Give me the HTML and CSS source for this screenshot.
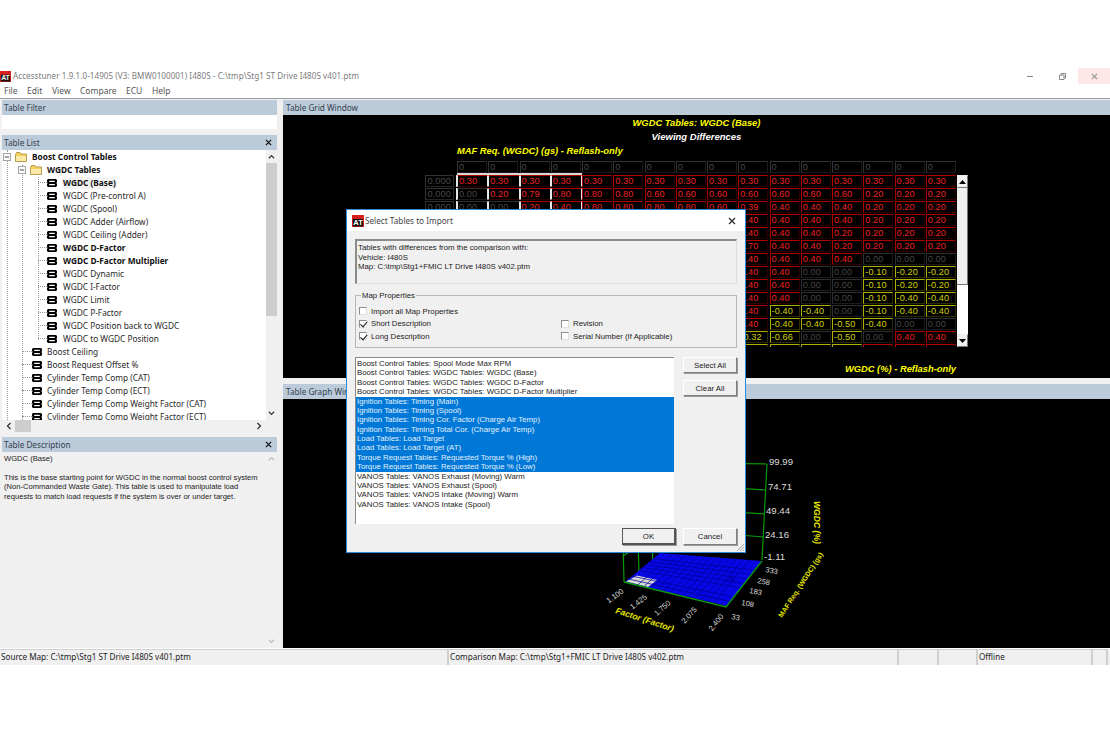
FILE: index.html
```html
<!DOCTYPE html>
<html lang="en">
<head>
<meta charset="utf-8">
<title>Accesstuner</title>
<link rel="stylesheet" href="styles.css">
</head>
<body>
<svg class="defs" width="0" height="0" aria-hidden="true">
  <symbol id="tbl" viewBox="0 0 10 8"><path fill-rule="evenodd" d="M1 0H9L10 1V3L9.4 4L10 5V7L9 8H1L0 7V5L.6 4L0 3V1ZM2.200 1.800V3H7.800V1.800ZM2.200 5V6.200H7.800V5Z" fill="#000"/></symbol>
  <symbol id="folder" viewBox="0 0 12 10"><path d="M.5 2.500V9.500H11.500V2H6L5 .5H1.500Z" fill="#f5cf5f" stroke="#a88a3a" stroke-width=".8"/><path d="M1 4H11V9H1Z" fill="#fbe9a8"/></symbol>
  <symbol id="minus" viewBox="0 0 9 9"><rect x=".5" y=".5" width="8" height="8" fill="#fff" stroke="#999"/><path d="M2 4.500H7" stroke="#333"/></symbol>
  <symbol id="up" viewBox="0 0 8 6"><path d="M1 5L4 2L7 5" fill="none" stroke="currentColor" stroke-width="1.300"/></symbol>
  <symbol id="down" viewBox="0 0 8 6"><path d="M1 1L4 4L7 1" fill="none" stroke="currentColor" stroke-width="1.300"/></symbol>
  <symbol id="left" viewBox="0 0 6 8"><path d="M5 1L2 4L5 7" fill="none" stroke="currentColor" stroke-width="1.300"/></symbol>
  <symbol id="right" viewBox="0 0 6 8"><path d="M1 1L4 4L1 7" fill="none" stroke="currentColor" stroke-width="1.300"/></symbol>
  <symbol id="x" viewBox="0 0 8 8"><path d="M1 1L7 7M7 1L1 7" fill="none" stroke="currentColor" stroke-width="1.400"/></symbol>
  <symbol id="at" viewBox="0 0 12 12"><rect width="12" height="12" fill="#d8201f"/><rect x="1" y="4" width="10" height="7.400" fill="#111"/><text x="6" y="10.200" text-anchor="middle" font-family="Liberation Sans" font-weight="700" font-size="7.500" fill="#fff">AT</text></symbol>
</svg>

<div class="window">
  <header class="titlebar">
    <svg class="app-icon"><use href="#at"/></svg>
    <span class="app-title">Accesstuner 1.9.1.0-14905 (V3: BMW0100001) I480S - C:\tmp\Stg1 ST Drive I480S v401.ptm</span>
    <span class="win-btn"><svg width="6" height="1"><path d="M0 .5H6" stroke="#888"/></svg></span>
    <span class="win-btn"><svg width="7" height="7" viewBox="0 0 7 7"><path d="M.5 2H5V6.500H.5ZM2 2V.5H6.500V5H5" fill="none" stroke="#888"/></svg></span>
    <span class="win-btn close"><svg width="7" height="7"><use href="#x"/></svg></span>
  </header>
  <nav class="menubar">
    <span>File</span><span>Edit</span><span>View</span><span>Compare</span><span>ECU</span><span>Help</span>
  </nav>

  <main class="workspace">
    <aside class="left">
      <div class="pane-head"><span>Table Filter</span></div>
      <div class="filter"></div>
      <div class="pane-head"><span>Table List</span><svg class="pane-x"><use href="#x"/></svg></div>
      <div class="tree-wrap">
        <div class="tree-row">
          <div class="tree">
            <i class="guide g1"></i><i class="guide g2"></i><i class="guide g3"></i>
            <div class="node n0 b"><svg class="exp"><use href="#minus"/></svg><svg class="fold"><use href="#folder"/></svg><span>Boost Control Tables</span></div>
            <div class="node n1 b"><svg class="exp"><use href="#minus"/></svg><svg class="fold"><use href="#folder"/></svg><span>WGDC Tables</span></div>
            <div class="node n2 b"><i class="conn"></i><svg class="tbl"><use href="#tbl"/></svg><span class="cur">WGDC (Base)</span></div>
            <div class="node n2"><i class="conn"></i><svg class="tbl"><use href="#tbl"/></svg><span>WGDC (Pre-control A)</span></div>
            <div class="node n2"><i class="conn"></i><svg class="tbl"><use href="#tbl"/></svg><span>WGDC (Spool)</span></div>
            <div class="node n2"><i class="conn"></i><svg class="tbl"><use href="#tbl"/></svg><span>WGDC Adder (Airflow)</span></div>
            <div class="node n2"><i class="conn"></i><svg class="tbl"><use href="#tbl"/></svg><span>WGDC Ceiling (Adder)</span></div>
            <div class="node n2 b"><i class="conn"></i><svg class="tbl"><use href="#tbl"/></svg><span>WGDC D-Factor</span></div>
            <div class="node n2 b"><i class="conn"></i><svg class="tbl"><use href="#tbl"/></svg><span>WGDC D-Factor Multiplier</span></div>
            <div class="node n2"><i class="conn"></i><svg class="tbl"><use href="#tbl"/></svg><span>WGDC Dynamic</span></div>
            <div class="node n2"><i class="conn"></i><svg class="tbl"><use href="#tbl"/></svg><span>WGDC I-Factor</span></div>
            <div class="node n2"><i class="conn"></i><svg class="tbl"><use href="#tbl"/></svg><span>WGDC Limit</span></div>
            <div class="node n2"><i class="conn"></i><svg class="tbl"><use href="#tbl"/></svg><span>WGDC P-Factor</span></div>
            <div class="node n2"><i class="conn"></i><svg class="tbl"><use href="#tbl"/></svg><span>WGDC Position back to WGDC</span></div>
            <div class="node n2"><i class="conn"></i><svg class="tbl"><use href="#tbl"/></svg><span>WGDC to WGDC Position</span></div>
            <div class="node n3"><i class="conn"></i><svg class="tbl"><use href="#tbl"/></svg><span>Boost Ceiling</span></div>
            <div class="node n3"><i class="conn"></i><svg class="tbl"><use href="#tbl"/></svg><span>Boost Request Offset %</span></div>
            <div class="node n3"><i class="conn"></i><svg class="tbl"><use href="#tbl"/></svg><span>Cylinder Temp Comp (CAT)</span></div>
            <div class="node n3"><i class="conn"></i><svg class="tbl"><use href="#tbl"/></svg><span>Cylinder Temp Comp (ECT)</span></div>
            <div class="node n3"><i class="conn"></i><svg class="tbl"><use href="#tbl"/></svg><span>Cylinder Temp Comp Weight Factor (CAT)</span></div>
            <div class="node n3"><i class="conn"></i><svg class="tbl"><use href="#tbl"/></svg><span>Cylinder Temp Comp Weight Factor (ECT)</span></div>
          </div>
          <div class="vscroll">
            <svg class="arr"><use href="#up"/></svg>
            <div class="thumb"></div>
            <svg class="arr"><use href="#down"/></svg>
          </div>
        </div>
        <div class="hscroll">
          <svg class="harr"><use href="#left"/></svg>
          <div class="hthumb"></div>
          <svg class="harr"><use href="#right"/></svg>
        </div>
      </div>
      <div class="pane-head desc-head"><span>Table Description</span><svg class="pane-x"><use href="#x"/></svg></div>
      <div class="desc">
        <div class="desc-text">
          <p>WGDC (Base)</p>
          <p>This is the base starting point for WGDC in the normal boost control system (Non-Commanded Waste Gate). This table is used to manipulate load requests to match load requests if the system is over or under target.</p>
        </div>
        <div class="vscroll dim">
          <svg class="arr"><use href="#up"/></svg>
          <svg class="arr"><use href="#down"/></svg>
        </div>
      </div>
    </aside>

    <section class="right">
      <div class="pane-head"><span>Table Grid Window</span></div>
      <div class="grid-panel">
        <div class="t-yellow center">WGDC Tables: WGDC (Base)</div>
        <div class="t-white center">Viewing Differences</div>
        <div class="t-yellow axis-x">MAF Req. (WGDC) (gs) - Reflash-only</div>
        <div class="grid-row">
          <div class="grid">
            <span class="corner"></span>
            <span class="c h">0</span><span class="c h">0</span><span class="c h">0</span><span class="c h">0</span><span class="c h">0</span><span class="c h">0</span><span class="c h">0</span><span class="c h">0</span><span class="c h">0</span><span class="c h">0</span><span class="c h">0</span><span class="c h">0</span><span class="c h">0</span><span class="c h">0</span><span class="c h">0</span><span class="c h">0</span>

            <span class="c rh">0.000</span>
            <span class="c r s st0 sl">0.30</span><span class="c r s st0">0.30</span><span class="c r s st0">0.30</span><span class="c r s st0">0.30</span><span class="c r">0.30</span><span class="c r">0.30</span><span class="c r">0.30</span><span class="c r">0.30</span><span class="c r">0.30</span><span class="c r">0.30</span><span class="c r">0.30</span><span class="c r">0.30</span><span class="c r">0.30</span><span class="c r">0.30</span><span class="c r">0.30</span><span class="c r">0.30</span>

            <span class="c rh">0.000</span>
            <span class="c g s sl">0.00</span><span class="c r s">0.20</span><span class="c r s">0.79</span><span class="c r s">0.80</span><span class="c r">0.80</span><span class="c r">0.80</span><span class="c r">0.60</span><span class="c r">0.60</span><span class="c r">0.60</span><span class="c r">0.60</span><span class="c r">0.60</span><span class="c r">0.60</span><span class="c r">0.60</span><span class="c r">0.20</span><span class="c r">0.20</span><span class="c r">0.20</span>

            <span class="c rh">0.000</span>
            <span class="c g s sl">0.00</span><span class="c g s">0.00</span><span class="c r s">0.20</span><span class="c r s">0.40</span><span class="c r">0.80</span><span class="c r">0.80</span><span class="c r">0.80</span><span class="c r">0.80</span><span class="c r">0.60</span><span class="c r">0.39</span><span class="c r">0.40</span><span class="c r">0.40</span><span class="c r">0.40</span><span class="c r">0.20</span><span class="c r">0.20</span><span class="c r">0.20</span>

            <span class="skip"></span><span class="c r">0.40</span><span class="c r">0.40</span><span class="c r">0.40</span><span class="c r">0.40</span><span class="c r">0.20</span><span class="c r">0.20</span><span class="c r">0.20</span>
            <span class="skip"></span><span class="c r">0.40</span><span class="c r">0.40</span><span class="c r">0.40</span><span class="c r">0.20</span><span class="c r">0.20</span><span class="c r">0.20</span><span class="c r">0.20</span>
            <span class="skip"></span><span class="c r">0.70</span><span class="c r">0.40</span><span class="c r">0.40</span><span class="c r">0.20</span><span class="c r">0.20</span><span class="c r">0.20</span><span class="c r">0.20</span>
            <span class="skip"></span><span class="c r">0.40</span><span class="c r">0.40</span><span class="c r">0.40</span><span class="c r">0.40</span><span class="c g">0.00</span><span class="c g">0.00</span><span class="c g">0.00</span>
            <span class="skip"></span><span class="c r">0.40</span><span class="c r">0.40</span><span class="c g">0.00</span><span class="c g">0.00</span><span class="c y">-0.10</span><span class="c y">-0.20</span><span class="c y">-0.20</span>
            <span class="skip"></span><span class="c r">0.40</span><span class="c r">0.40</span><span class="c g">0.00</span><span class="c g">0.00</span><span class="c y">-0.10</span><span class="c y">-0.20</span><span class="c y">-0.20</span>
            <span class="skip"></span><span class="c r">0.40</span><span class="c r">0.40</span><span class="c g">0.00</span><span class="c g">0.00</span><span class="c y">-0.10</span><span class="c y">-0.40</span><span class="c y">-0.40</span>
            <span class="skip"></span><span class="c r">0.40</span><span class="c y">-0.40</span><span class="c y">-0.40</span><span class="c g">0.00</span><span class="c y">-0.10</span><span class="c y">-0.40</span><span class="c y">-0.40</span>
            <span class="skip"></span><span class="c r">0.40</span><span class="c y">-0.40</span><span class="c y">-0.40</span><span class="c y">-0.50</span><span class="c y">-0.40</span><span class="c g">0.00</span><span class="c g">0.00</span>
            <span class="skip"></span><span class="c y">-0.32</span><span class="c y">-0.66</span><span class="c g">0.00</span><span class="c y">-0.50</span><span class="c g">0.00</span><span class="c r">0.40</span><span class="c r">0.40</span>
            <span class="skip"></span><span class="c y"></span><span class="c y"></span><span class="c y"></span><span class="c y"></span><span class="c r"></span><span class="c r"></span><span class="c r"></span>
          </div>
          <div class="grid-scroll">
            <div class="gs-btn"><svg width="7" height="4" viewBox="0 0 7 4"><path d="M0 4L3.500 0L7 4Z" fill="#000"/></svg></div>
            <div class="gs-thumb"></div>
            <div class="gs-track"></div>
            <div class="gs-btn"><svg width="7" height="4" viewBox="0 0 7 4"><path d="M0 0L3.500 4L7 0Z" fill="#000"/></svg></div>
          </div>
        </div>
        <div class="t-yellow axis-z">WGDC (%) - Reflash-only</div>
      </div>
      <div class="pane-head graph-head"><span>Table Graph Window</span></div>
      <div class="graph">
        <svg class="chart" viewBox="283 399 827 248" preserveAspectRatio="none">
          <g stroke="#0a9a0a" stroke-width="1.200" fill="none">
            <path d="M767 464L762 560"/>
            <path d="M700 463L767 464M700 486L766 490M700 510L765 514M700 532L764 537"/>
            <path d="M623 540L624 582M638 540L639 573M652 540L653 565M623 556L632 550"/>
          </g>
          <path d="M625 582L727 606L762 561L660 553Z" fill="#0707e6"/>
          <path d="M626 581.500L637 575.500L657 580L648 587Z" fill="#d8d8d8"/>
          <g stroke="#00008c" stroke-width=".7" fill="none">
            <path d="M632 576.200L734 597M639 570.400L741 588M646 564.600L748 579M653 558.800L755 570M628.500 579L730.500 601.500M642.500 567.500L744.500 583.500M649.500 561.700L751.500 574.500"/>
            <path d="M637.750 585L672.750 554M650.500 588L685.500 555M663.250 591L698.250 556M676 594L711 557M688.750 597L723.750 558M701.500 600L736.500 559M714.250 603L749.250 560M644 586.500L679 554.500M657 589.500L692 555.500M670 592.500L705 556.500M682.500 595.500L717.500 557.500M695 598.500L730 558.500M708 601.500L743 559.500"/>
            <path d="M725 583L731 576L736 584M729 582L733 577"/>
          </g>
          <path d="M624 582L726 607L762 561" fill="none" stroke="#0a9a0a" stroke-width="1.300"/>
          <g class="val">
            <text x="769" y="465">99.99</text>
            <text x="768" y="490">74.71</text>
            <text x="766" y="514">49.44</text>
            <text x="765" y="538">24.16</text>
            <text x="764" y="560">-1.11</text>
          </g>
          <g class="tick">
            <text class="mid" transform="translate(616.500 598) rotate(-36)">1.100</text>
            <text class="mid" transform="translate(640 604) rotate(-38)">1.425</text>
            <text class="mid" transform="translate(664 610) rotate(-42)">1.750</text>
            <text class="mid" transform="translate(691 617) rotate(-48)">2.075</text>
            <text class="mid" transform="translate(718 624) rotate(-52)">2.400</text>
            <text transform="translate(731 619) rotate(10)">33</text>
            <text transform="translate(741 605) rotate(10)">108</text>
            <text transform="translate(749 593) rotate(10)">183</text>
            <text transform="translate(757 583) rotate(10)">258</text>
            <text transform="translate(765 572) rotate(10)">333</text>
          </g>
          <g class="lab">
            <text transform="translate(615 613) rotate(18)">Factor (Factor)</text>
            <text transform="translate(782 618) rotate(-57)" class="small">MAF Req. (WGDC) (gs)</text>
            <text transform="translate(814 501) rotate(90)">WGDC (%)</text>
          </g>
        </svg>
      </div>
    </section>
  </main>

  <footer class="status">
    <span class="st s1">Source Map: C:\tmp\Stg1 ST Drive I480S v401.ptm</span>
    <span class="st s2">Comparison Map: C:\tmp\Stg1+FMIC LT Drive I480S v402.ptm</span>
    <span class="st s3"></span>
    <span class="st s4"></span>
    <span class="st s5">Offline</span>
    <span class="st s6"></span>
  </footer>
</div>

<div class="dialog">
  <div class="dlg-title">
    <svg class="dlg-icon"><use href="#at"/></svg>
    <span>Select Tables to Import</span>
    <svg class="dlg-x"><use href="#x"/></svg>
  </div>
  <div class="dlg-body">
    <div class="info">
      Tables with differences from the comparison with:<br>
      Vehicle: I480S<br>
      Map: C:\tmp\Stg1+FMIC LT Drive I480S v402.ptm
    </div>
    <fieldset class="props">
      <legend>Map Properties</legend>
      <div class="props-grid">
        <label class="chk"><i class="cb"></i>Import all Map Properties</label><span></span>
        <label class="chk"><i class="cb on"></i>Short Description</label>
        <label class="chk"><i class="cb"></i>Revision</label>
        <label class="chk"><i class="cb on"></i>Long Description</label>
        <label class="chk"><i class="cb"></i>Serial Number (If Applicable)</label>
      </div>
    </fieldset>
    <div class="list-row">
      <ul class="list">
        <li>Boost Control Tables: Spool Mode Max RPM</li>
        <li>Boost Control Tables: WGDC Tables: WGDC (Base)</li>
        <li>Boost Control Tables: WGDC Tables: WGDC D-Factor</li>
        <li>Boost Control Tables: WGDC Tables: WGDC D-Factor Multiplier</li>
        <li class="sel">Ignition Tables: Timing (Main)</li>
        <li class="sel">Ignition Tables: Timing (Spool)</li>
        <li class="sel">Ignition Tables: Timing Cor. Factor (Charge Air Temp)</li>
        <li class="sel">Ignition Tables: Timing Total Cor. (Charge Air Temp)</li>
        <li class="sel">Load Tables: Load Target</li>
        <li class="sel">Load Tables: Load Target (AT)</li>
        <li class="sel">Torque Request Tables: Requested Torque % (High)</li>
        <li class="sel">Torque Request Tables: Requested Torque % (Low)</li>
        <li>VANOS Tables: VANOS Exhaust (Moving) Warm</li>
        <li>VANOS Tables: VANOS Exhaust (Spool)</li>
        <li>VANOS Tables: VANOS Intake (Moving) Warm</li>
        <li>VANOS Tables: VANOS Intake (Spool)</li>
      </ul>
      <div class="side-btns">
        <button class="btn">Select All</button>
        <button class="btn">Clear All</button>
      </div>
    </div>
    <div class="dlg-foot">
      <button class="btn def">OK</button>
      <button class="btn">Cancel</button>
    </div>
  </div>
  <svg class="grip" width="10" height="10" viewBox="0 0 10 10"><path d="M9 2L2 9M9 5L5 9M9 8L8 9" stroke="#aaa"/></svg>
</div>
</body>
</html>
```
FILE: styles.css
```css
* { box-sizing: border-box; }
html, body { margin: 0; padding: 0; }
body {
  position: relative;
  width: 1110px;
  height: 730px;
  overflow: hidden;
  background: #fff;
  font-family: "Noto Sans", "Liberation Sans", sans-serif;
  color: #222;
}
.defs { position: absolute; }

.window { margin-top: 68px; display: flex; flex-direction: column; height: 597px; }

.titlebar { display: flex; align-items: center; height: 16px; flex: none; }
.app-icon { width: 11px; height: 11px; margin-right: 2px; flex: none; }
.app-title { font-size: 8.05px; color: #7c7c7c; flex: 1; white-space: nowrap; letter-spacing: .07px; padding-bottom: 2px; }
.win-btn { width: 32px; height: 16px; display: flex; align-items: center; justify-content: center; color: #999; }
.win-btn.close { background: #fde7e7; }

.menubar { display: flex; height: 14px; flex: none; font-size: 8.5px; color: #555; align-items: center; padding: 0 0 2px 4px; }
.menubar span:nth-child(1) { width: 23px; }
.menubar span:nth-child(2) { width: 25px; }
.menubar span:nth-child(3) { width: 28px; }
.menubar span:nth-child(4) { width: 46px; }
.menubar span:nth-child(5) { width: 26px; }

.workspace { flex: 1; display: flex; border-top: 1px solid #9a9a9a; padding-top: 1px; min-height: 0; background: #f0f0f0; }

.left { width: 283px; flex: none; padding: 0 6px 0 2px; display: flex; flex-direction: column; }
.right { flex: 1; display: flex; flex-direction: column; min-width: 0; }

.pane-head { height: 15px; flex: none; background: #bccbd9; font-size: 8.2px; color: #33414f; display: flex; align-items: center; justify-content: space-between; padding: 0 5px 0 2px; }
.right .pane-head { padding-left: 3px; }
.pane-head span { white-space: nowrap; }
.pane-x { width: 7px; height: 7px; color: #111; }

.filter { height: 14px; background: #fff; flex: none; margin-bottom: 6px; }

.tree-wrap { height: 282px; flex: none; display: flex; flex-direction: column; }
.tree-row { flex: 1; display: flex; min-height: 0; }
.tree { flex: 1; background: #fff; overflow: hidden; position: relative; min-width: 0; }
.guide { position: absolute; width: 0; border-left: 1px dotted #999; }
.g1 { left: 5px; top: 0; height: 270px; }
.g2 { left: 20px; top: 15px; height: 255px; }
.g3 { left: 36px; top: 27px; height: 163px; }

.node { height: 13px; display: flex; align-items: center; font-size: 8.3px; white-space: nowrap; color: #2a2a2a; position: relative; }
.node.b { font-weight: 700; color: #111; }
.node span { padding: 0 1px 1px; }
.cur { background: #f3f3f3; }
.exp { width: 8px; height: 8px; flex: none; margin-right: 4px; }
.fold { width: 12px; height: 10px; flex: none; margin-right: 4px; }
.tbl { width: 10px; height: 8px; flex: none; margin-right: 5px; }
.conn { display: block; height: 0; border-top: 1px dotted #999; flex: none; }
.n0 { padding-left: 1px; }
.n1 { padding-left: 16px; }
.n2 { padding-left: 36px; }
.n2 .conn { width: 9px; }
.n3 { padding-left: 20px; }
.n3 .conn { width: 10px; }
.n3 .tbl { margin-right: 4px; }

.vscroll { width: 11px; flex: none; background: #f0f0f0; display: flex; flex-direction: column; justify-content: space-between; align-items: center; color: #333; }
.vscroll.dim { color: #bbb; }
.arr { width: 7px; height: 13px; flex: none; }
.thumb { width: 100%; height: 153px; background: #cdcdcd; margin-bottom: auto; }

.hscroll { height: 12px; flex: none; background: #f0f0f0; display: flex; align-items: center; color: #333; }
.harr { width: 13px; height: 8px; flex: none; }
.harr:last-child { margin-left: auto; margin-right: 11px; }
.hthumb { width: 16px; height: 100%; background: #cdcdcd; }

.desc-head { margin-top: 5px; }
.desc { flex: 1; display: flex; background: #f0f0f0; min-height: 0; }
.desc-text { flex: 1; font-family: "Liberation Sans", sans-serif; font-size: 7.6px; line-height: 9.5px; padding: 2px 2px 0 2px; color: #222; }
.desc-text p { margin: 0 0 9px; }

.grid-panel { height: 263px; flex: none; background: #000; font-family: "Liberation Sans", sans-serif; padding-top: 1px; overflow: hidden; }
.t-yellow, .t-white { font-weight: 700; font-style: italic; font-size: 9.35px; line-height: 14px; height: 14px; white-space: nowrap; }
.t-yellow { color: #ffff00; }
.t-white { color: #fff; font-size: 9.5px; }
.center { text-align: center; }
.axis-x { padding-left: 174px; height: 15px; line-height: 15px; }
.axis-z { text-align: right; padding-right: 154px; margin-top: 15px; }

.grid-row { display: flex; margin: 2px 0 0 142px; align-items: flex-start; }
.grid { display: grid; grid-template-columns: 32px repeat(16, 31.25px); grid-template-rows: 14px; grid-auto-rows: 13px; width: 532px; height: 186px; flex: none; overflow: hidden; }
.corner { display: block; }
.skip { grid-column: span 10; }
.c { display: block; width: 30px; height: 12px; font-size: 9.2px; line-height: 10px; padding-left: 1px; border: 1px solid #1c1c1c; white-space: nowrap; overflow: hidden; letter-spacing: .1px; }
.h { color: #4a4a4a; border-color: #333 #1a1a1a #1a1a1a #333; }
.rh { width: 29px; color: #4a4a4a; border-color: #333 #262626 #262626 #333; text-align: right; padding-right: 2px; }
.r { color: #f02020; border-color: #b00000 #2c0000 #300000 #b00000; }
.g { color: #464646; border-color: #303030 #1c1c1c #1c1c1c #303030; }
.y { color: #d0d000; border-color: #b0b000 #2c2c00 #2c2c00 #b0b000; }
.s { border-left-color: #e8e8e8; border-right-color: #e8e8e8; width: 31.25px; }
.st0 { box-shadow: 0 -2px 0 #d8d8d8; }
.sl { box-shadow: -1px 0 0 #e8e8e8; }
.st0.sl { box-shadow: 0 -2px 0 #d8d8d8, -1px 0 0 #e8e8e8; }
.grid-scroll { width: 11px; height: 172px; margin-top: 14px; flex: none; display: flex; flex-direction: column; background: #fff; }
.gs-btn { height: 13px; flex: none; background: #f0f0f0; display: flex; align-items: center; justify-content: center; border: 1px solid #eee; border-right-color: #777; border-bottom-color: #777; }
.gs-thumb { height: 97px; flex: none; background: #f0f0f0; border-right: 1px solid #777; border-bottom: 1px solid #777; }
.gs-track { flex: 1; background: #fff; }

.graph-head { margin-top: 6px; }
.graph { flex: 1; background: #000; min-height: 0; }
.chart { display: block; width: 827px; height: 248px; font-family: "Liberation Sans", sans-serif; }
.val text { fill: #dcdcdc; font-size: 9.6px; }
.tick text { fill: #d8d8d8; font-size: 7.6px; }
.tick text.mid { text-anchor: middle; }
.lab text { fill: #e6e600; font-size: 8.6px; font-weight: 700; font-style: italic; }
.lab text.small { font-size: 7px; font-style: normal; }

.status { height: 17px; flex: none; display: flex; background: #f0f0f0; border-top: 1px solid #fff; font-size: 8.15px; color: #222; }
.st { display: block; border-right: 2px solid #cfcfcf; border-top: 1px solid #cfcfcf; padding-left: 1px; line-height: 14px; white-space: nowrap; }
.s1 { width: 449px; }
.s2 { width: 450px; }
.s3 { width: 40px; }
.s4 { width: 39px; }
.s5 { width: 115px; }
.s6 { width: 15px; }

.dialog { position: absolute; left: 346px; top: 209px; width: 400px; height: 344px; background: #f0f0f0; border: 1px solid #2d8ad6; font-family: "Liberation Sans", sans-serif; font-size: 7.8px; color: #222; display: flex; flex-direction: column; }
.dlg-title { height: 21px; flex: none; background: #fff; display: flex; align-items: center; padding: 0 9px 0 5px; font-family: "Noto Sans", sans-serif; font-size: 8.2px; color: #444; }
.dlg-icon { width: 12px; height: 12px; margin-right: 1px; flex: none; }
.dlg-title span { flex: 1; }
.dlg-x { width: 8px; height: 8px; color: #333; }
.dlg-body { flex: 1; padding: 8px 8px 0 8px; display: flex; flex-direction: column; min-height: 0; }

.info { height: 45px; flex: none; line-height: 9.5px; padding: 2px 3px 0 1px; border: 1px solid #ddd; border-top: 2px solid #8a8a8a; border-left: 2px solid #8a8a8a; }

.props { margin: 7px 0 0; padding: 5px 3px 0 3px; height: 57px; flex: none; border: 1px solid #b8b8b8; min-width: 0; }
.props legend { padding: 0 1px; margin-left: 2px; font-size: 7.8px; line-height: 9px; }
.props-grid { display: grid; grid-template-columns: 202px 1fr; grid-auto-rows: 12.6px; }
.chk { display: flex; align-items: center; gap: 4px; white-space: nowrap; }
.cb { display: block; width: 8px; height: 8px; flex: none; background: #fff; border: 1px solid #8d8d8d; border-right-color: #e0e0e0; border-bottom-color: #e0e0e0; position: relative; }
.cb.on::after { content: ""; position: absolute; left: 1.5px; top: -.5px; width: 3px; height: 5.5px; border: solid #111; border-width: 0 1.4px 1.4px 0; transform: rotate(40deg); }

.list-row { display: flex; margin-top: 9px; gap: 9px; height: 167px; flex: none; }
.list { margin: 0; padding: 1px 0 0 0; list-style: none; width: 319px; flex: none; background: #fff; border-top: 1px solid #8a8a8a; border-left: 1px solid #8a8a8a; }
.list li { height: 9.38px; line-height: 9.4px; padding-left: 1px; white-space: nowrap; }
.list li.sel { background: #0078d7; color: #e3f0fb; }
.side-btns { display: flex; flex-direction: column; gap: 7px; width: 54px; }
.btn { display: block; width: 54px; height: 16px; padding: 0; background: #f0f0f0; font: inherit; color: #222; border: 1px solid #fff; border-right-color: #808080; border-bottom-color: #808080; box-shadow: 1px 1px 0 #9a9a9a; }
.btn.def { border-width: 1px 2px 2px 1px; border-color: #555; }
.dlg-foot { display: flex; justify-content: flex-end; gap: 7px; margin-top: 4px; }
.dlg-foot .btn { height: 17px; }
.grip { position: absolute; right: 0; bottom: 0; }
```
